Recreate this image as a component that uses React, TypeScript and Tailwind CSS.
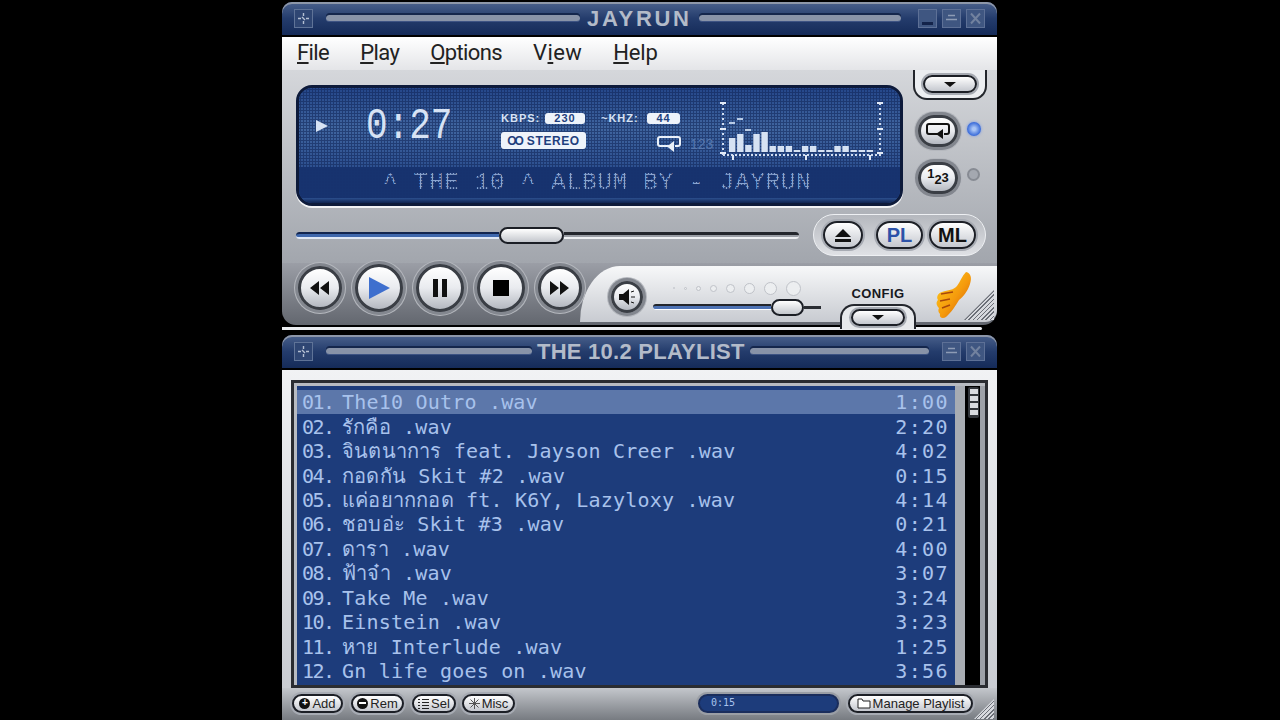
import type { ReactNode } from "react";

const tracks = [
  ["01.", "The10 Outro .wav", "1:00"],
  ["02.", "รักคือ .wav", "2:20"],
  ["03.", "จินตนาการ feat. Jayson Creer .wav", "4:02"],
  ["04.", "กอดกัน Skit #2 .wav", "0:15"],
  ["05.", "แค่อยากกอด ft. K6Y, Lazyloxy .wav", "4:14"],
  ["06.", "ชอบอ่ะ Skit #3 .wav", "0:21"],
  ["07.", "ดารา .wav", "4:00"],
  ["08.", "ฟ้าจ๋า .wav", "3:07"],
  ["09.", "Take Me .wav", "3:24"],
  ["10.", "Einstein .wav", "3:23"],
  ["11.", "หาย Interlude .wav", "1:25"],
  ["12.", "Gn life goes on .wav", "3:56"],
];

const bars = [14, 18, 7, 18, 20, 6, 6, 6, 2, 6, 6, 2, 2, 6, 6, 2, 2, 2];
const volumeDots = [2, 3, 5, 7, 9, 11, 13, 15];

function SysIcon() {
  return (
    <div className="flex h-[19px] w-[19px] shrink-0 items-center justify-center border border-[#5f7397] bg-[#2f4673]">
      <svg width="13" height="13" viewBox="0 0 13 13" stroke="#b4bfd2" strokeWidth="1.4">
        <path d="M6.5 1v3M6.5 9v3M1 6.5h3M9 6.5h3M5 5l3 3" />
      </svg>
    </div>
  );
}

function Groove({ className }: { className: string }) {
  return <div className={`h-[7px] shrink-0 rounded-full border-b border-[#3d5383] bg-[#8893a8] shadow-[0_-2px_0_#14264c] ${className}`} />;
}

function WinBtn({ kind }: { kind: "min" | "max" | "close" }) {
  return (
    <div className="flex h-[19px] w-[19px] items-center justify-center border border-[#5d7096] bg-[#3f5681]">
      <svg width="15" height="15" viewBox="0 0 15 15" fill="none">
        {kind === "min" && <path d="M2 12.5h11" stroke="#13234a" strokeWidth="3" />}
        {kind === "max" && <path d="M4 4.5h7M2 8.5h11" stroke="#8d9bb5" strokeWidth="1.6" />}
        {kind === "close" && <path d="M3 2.5l9 10M12 2.5l-9 10" stroke="#72829f" strokeWidth="2" />}
      </svg>
    </div>
  );
}

function TitleBar({ children }: { children: ReactNode }) {
  return (
    <div className="flex h-[33px] items-center rounded-t-[10px] bg-gradient-to-b from-[#4a618c] via-[#243c6c] to-[#152b59] pl-[12px] pr-[12px] shadow-[inset_0_2px_0_#8d97a9]">
      {children}
    </div>
  );
}

function Circle({ w, h, children }: { w: number; h: number; children: ReactNode }) {
  return (
    <div
      className="flex shrink-0 items-center justify-center rounded-full border-[3px] border-[#3a3e45] bg-gradient-to-b from-[#ffffff] via-[#e9ebef] to-[#b4b8c0] shadow-[0_0_0_3px_#83878f,0_0_0_4px_#b5b8be]"
      style={{ width: w, height: h }}
    >
      {children}
    </div>
  );
}

function Pill({ w, h, children, className = "" }: { w: string; h: string; children: ReactNode; className?: string }) {
  return (
    <div className={`flex shrink-0 items-center justify-center rounded-full border-[2.5px] border-[#1c1f26] bg-gradient-to-b from-[#ffffff] to-[#c5c8cf] shadow-[0_0_0_2px_#a7abb3] ${w} ${h} ${className}`}>
      {children}
    </div>
  );
}

function Down() {
  return <div className="h-0 w-0 border-x-[6px] border-t-[5px] border-x-transparent border-t-[#111]" />;
}

function ToolBtn({ w, icon, label }: { w: string; icon: ReactNode; label: string }) {
  return (
    <Pill w={w} h="h-[19px]" className="gap-[2px] text-[13px] leading-none text-[#222]">
      {icon}
      <span>{label}</span>
    </Pill>
  );
}

function Spectrum() {
  return (
    <svg width="168" height="64" viewBox="0 0 168 64" className="shrink-0">
      <path d="M3 2v53M160 2v53" stroke="#cfdcf0" strokeWidth="2" strokeDasharray="2 3" />
      <path d="M0 2h6M0 28h6M0 52h6M157 2h6M157 28h6M157 52h6" stroke="#e3ebf7" strokeWidth="2" />
      <path d="M3 54h158" stroke="#cfdcf0" strokeWidth="2" strokeDasharray="2 2" />
      <path d="M13 54v5M86 54v5M150 54v5" stroke="#dfe8f5" strokeWidth="2" />
      {bars.map((h, i) => (
        <rect key={i} x={9 + i * 8.1} y={51 - h} width="6.4" height={h} fill="#d6e2f3" />
      ))}
      <path d="M9 22h6M17 18h6M25 29h6" stroke="#b8cbe6" strokeWidth="2" />
    </svg>
  );
}

function Thumb() {
  return (
    <svg width="38" height="48" viewBox="0 0 38 48" className="shrink-0">
      <defs>
        <linearGradient id="th" x1="0" y1="0" x2="1" y2="1">
          <stop offset="0" stopColor="#ffd21f" />
          <stop offset="0.55" stopColor="#f59a0c" />
          <stop offset="1" stopColor="#c9530a" />
        </linearGradient>
      </defs>
      <path d="M31 1c5 1 6 6 4 12-2 7-7 13-11 16-3 5-8 13-13 17-3 2-7 1-6-3-2-2-2-4-1-6-3-3-3-6-1-8-2-3 0-7 4-8 6-2 12-2 15-6 3-4 5-10 9-14z" fill="url(#th)" />
      <path d="M6 23l12-2M5 30l10-2M7 37l8-3" stroke="#a8480a" strokeWidth="1.5" fill="none" />
    </svg>
  );
}

function Grip({ size }: { size: string }) {
  return (
    <div className={`absolute bottom-[2px] right-[3px] ${size} bg-[repeating-linear-gradient(135deg,#6b6f77_0_1px,#d7d9de_1px_3px)] [clip-path:polygon(100%_0,100%_100%,0_100%)]`} />
  );
}

export default function App() {
  const mono = "font-['DejaVu_Sans_Mono','Noto_Sans',monospace]";
  return (
    <div className="h-[720px] w-[1280px] overflow-hidden bg-black pl-[282px] pt-[2px] font-['Liberation_Sans',sans-serif]">
      <div className="w-[715px]">
        {/* main window */}
        <TitleBar>
          <SysIcon />
          <Groove className="ml-[13px] w-[254px]" />
          <span className="mx-[7px] whitespace-nowrap text-[22px] font-bold leading-none tracking-[2.7px] text-[#b3bbc9]">JAYRUN</span>
          <Groove className="w-[202px]" />
          <div className="ml-[17px] flex gap-[5px]">
            <WinBtn kind="min" />
            <WinBtn kind="max" />
            <WinBtn kind="close" />
          </div>
        </TitleBar>
        <div className="mt-[2px] flex h-[33px] items-center gap-[31px] bg-gradient-to-b from-white to-[#e4e5e8] pb-[2px] pl-[15px] font-['Roboto',sans-serif] text-[22px] leading-none tracking-[-0.6px] text-[#222]">
          <span><u>F</u>ile</span>
          <span><u>P</u>lay</span>
          <span><u>O</u>ptions</span>
          <span className="tracking-[0.4px]">V<u>i</u>ew</span>
          <span className="tracking-[-0.2px]"><u>H</u>elp</span>
        </div>
        <div className="flex h-[193px] bg-gradient-to-b from-[#d5d7db] to-[#a2a6ad] pl-[14px]">
          <div className="min-w-0 flex-1">
            <div className="mt-[15px] flex h-[121px] w-[607px] flex-col overflow-hidden rounded-[16px] border-[3px] border-[#0d1a3a] bg-[#2b4d8c] shadow-[0_2px_0_#f2f3f5]">
              <div className="relative flex h-[79px] shrink-0 bg-gradient-to-b from-[#25478a] via-[#40659f] to-[#2d5090] pl-[17px] pr-[14px] pt-[12px] text-[#d7e3f4]">
                <div className="absolute inset-0 bg-[radial-gradient(circle,rgba(15,35,85,0.55)_1px,transparent_1.2px)] bg-[length:3px_3px]" />
                <div className="relative mt-[20px] h-0 w-0 border-y-[6px] border-l-[12px] border-y-transparent border-l-[#d7e3f4]" />
                <div className="relative ml-[38px] mt-[4px] w-[85px] origin-top scale-y-125 font-['Liberation_Mono',monospace] text-[36px] leading-none">0:27</div>
                <div className="relative ml-[50px] flex w-[214px] flex-col gap-[7px] pt-[12px]">
                  <div className="flex h-[13px] items-center text-[11px] font-bold leading-none tracking-[1px]">
                    <span className="w-[44px]">KBPS:</span>
                    <div className="w-[40px] rounded-[3px] bg-[#eef3fa] text-center text-[11px] text-[#1f3f7d]">230</div>
                    <span className="ml-[16px] w-[46px]">~KHZ:</span>
                    <div className="w-[33px] rounded-[3px] bg-[#eef3fa] text-center text-[11px] text-[#1f3f7d]">44</div>
                  </div>
                  <div className="flex items-start">
                    <div className="flex h-[17px] w-[85px] items-center justify-center gap-[2px] rounded-[3px] bg-[#eef3fa] text-[12px] font-bold leading-none tracking-[0.6px] text-[#1f3f7d]">
                      <span className="tracking-[-2px]">OO</span>
                      <span className="ml-[3px]">STEREO</span>
                    </div>
                    <svg width="26" height="17" viewBox="0 0 26 17" className="ml-[70px] mt-[3px]" fill="none" stroke="#eaf0f9" strokeWidth="2">
                      <path d="M13 11H4a2 2 0 0 1-2-2V4a2 2 0 0 1 2-2h18a2 2 0 0 1 2 2v5a2 2 0 0 1-2 2h-3" />
                      <path d="M18 6v11l-7-5.500z" fill="#eaf0f9" stroke="none" />
                    </svg>
                    <span className="ml-[8px] mt-[5px] text-[14px] font-normal leading-none text-[#5677ad]">123</span>
                  </div>
                </div>
                <div className="relative ml-[7px] mt-[1px]">
                  <Spectrum />
                </div>
              </div>
              <div className="relative flex h-[31px] shrink-0 items-center bg-[#17336f] pl-[84px] font-['Liberation_Mono',monospace] text-[24px] leading-none tracking-[0.9px] text-[#8aa4d0]">
                <div className="absolute inset-0 bg-[radial-gradient(circle,transparent_1px,rgba(23,51,111,0.8)_1.2px)] bg-[length:3px_3px]" />
                <span className="whitespace-pre">^ THE 10 ^ ALBUM BY - JAYRUN</span>
              </div>
              <div className="flex-1 bg-gradient-to-b from-[#2c4f8e] to-[#0f2350]" />
            </div>
            <div className="mt-[23px] flex h-[12px] w-[503px] items-center">
              <div className="h-[7px] w-[203px] rounded-l-full border-y-2 border-t-[#12254f] border-b-[#dfe8f6] bg-[#3f68ad]" />
              <div className="z-10 h-[17px] w-[65px] shrink-0 rounded-full border-[2.5px] border-[#1b1e25] bg-gradient-to-b from-white to-[#c4c7cd]" />
              <div className="h-[7px] flex-1 rounded-r-full border-t-[3px] border-b-2 border-t-[#23262c] border-b-[#eef0f3] bg-[#9a9ea5]" />
            </div>
          </div>
          <div className="flex w-[94px] flex-col">
            <div className="ml-[10px] flex h-[30px] w-[74px] items-center justify-center rounded-b-[14px] border-x-2 border-b-2 border-[#23262c] bg-[#eceef1]">
              <Pill w="w-[54px]" h="h-[18px]"><Down /></Pill>
            </div>
            <div className="ml-[15px] mt-[15px] flex items-center gap-[9px]">
              <Circle w={40} h={32}>
                <svg width="26" height="18" viewBox="0 0 26 18" fill="none" stroke="#111" strokeWidth="2">
                  <path d="M13 12H4a2 2 0 0 1-2-2V4a2 2 0 0 1 2-2h18a2 2 0 0 1 2 2v6a2 2 0 0 1-2 2h-3" />
                  <path d="M18 7v10l-7-5z" fill="#111" stroke="none" />
                </svg>
              </Circle>
              <div className="mb-[5px] h-[14px] w-[14px] rounded-full bg-[radial-gradient(circle,#a9c5f5_15%,#3467d8_70%)] shadow-[0_0_3px_#6f93e8]" />
            </div>
            <div className="ml-[15px] mt-[15px] flex items-center gap-[9px]">
              <Circle w={40} h={32}>
                <div className="flex text-[13px] font-bold leading-none text-[#111]">
                  <span className="-mt-[3px]">1</span>
                  <span className="mt-[3px]">2</span>
                  <span className="mt-[1px]">3</span>
                </div>
              </Circle>
              <div className="mb-[7px] h-[13px] w-[13px] rounded-full border-[2px] border-[#878b93] bg-[#a4a8b0]" />
            </div>
            <div className="ml-[-90px] mt-[20px] flex h-[42px] w-[173px] items-center justify-center rounded-full border border-[#eef0f3] bg-gradient-to-b from-[#b5b8be] to-[#dfe1e5]">
              <Pill w="w-[40px]" h="h-[28px]">
                <svg width="18" height="15" viewBox="0 0 18 15" fill="#111"><path d="M9 1l8 8H1zM1 11h16v3H1z" /></svg>
              </Pill>
              <Pill w="w-[47px]" h="h-[28px]" className="ml-[13px]"><span className="text-[20px] font-bold leading-none text-[#2c52a8]">PL</span></Pill>
              <Pill w="w-[47px]" h="h-[28px]" className="ml-[6px]"><span className="text-[20px] font-bold leading-none text-[#111]">ML</span></Pill>
            </div>
          </div>
        </div>
        <div className="relative flex h-[62px] rounded-b-[14px] bg-gradient-to-b from-[#9b9ea6] to-[#63676f]">
          <div className="relative z-10 flex h-[50px] w-[298px] shrink-0 items-center gap-[13px] pl-[16px]">
            <Circle w={44} h={44}>
              <svg width="22" height="14" viewBox="0 0 22 14" fill="#111"><path d="M10 0v14L1 7zM20 0v14l-9-7z" /></svg>
            </Circle>
            <Circle w={48} h={48}>
              <svg width="24" height="24" viewBox="0 0 24 24"><path d="M2 1l21 11L2 23z" fill="#3e6fce" /></svg>
            </Circle>
            <Circle w={48} h={48}>
              <div className="flex gap-[4px]">
                <div className="h-[18px] w-[5px] bg-[#111]" />
                <div className="h-[18px] w-[5px] bg-[#111]" />
              </div>
            </Circle>
            <Circle w={48} h={48}>
              <div className="h-[16px] w-[16px] bg-black" />
            </Circle>
            <Circle w={44} h={44}>
              <svg width="22" height="14" viewBox="0 0 22 14" fill="#111"><path d="M1 0v14l9-7zM11 0v14l9-7z" /></svg>
            </Circle>
          </div>
          <div className="relative mt-[3px] flex h-[56px] flex-1 rounded-tl-[40px_56px] rounded-br-[12px] bg-gradient-to-b from-[#f7f8f9] to-[#c8cbd1] pl-[31px]">
            <div className="mt-[15px]">
              <Circle w={32} h={32}>
                <svg width="18" height="16" viewBox="0 0 18 16" fill="#111"><path d="M1 5h4l6-5v16l-6-5H1z" /><path d="M13 3l3-1M13 8h4M13 13l3 1" stroke="#111" fill="none" /></svg>
              </Circle>
            </div>
            <div className="ml-[10px] w-[168px]">
              <div className="mt-[13px] flex h-[18px] items-center justify-between px-[20px]">
                {volumeDots.map((d) => (
                  <div key={d} className="rounded-full border border-[#bfc2c8] bg-[#eceef0]" style={{ width: d, height: d }} />
                ))}
              </div>
              <div className="mt-[5px] flex h-[10px] items-center">
                <div className="h-[6px] w-[118px] rounded-l-full border-t-2 border-b border-t-[#23262c] border-b-[#fff] bg-[#4d72b4]" />
                <div className="z-10 h-[17px] w-[33px] shrink-0 rounded-full border-[2px] border-[#1b1e25] bg-gradient-to-b from-white to-[#c4c7cd]" />
                <div className="h-[3px] flex-1 bg-[#2a2d33]" />
              </div>
            </div>
            <div className="ml-[19px] flex w-[76px] flex-col items-center">
              <span className="mt-[21px] text-[13px] font-bold leading-none tracking-[0.4px] text-[#16181d]">CONFIG</span>
              <div className="mt-[4px] flex h-[25px] w-[76px] shrink-0 justify-center rounded-t-[14px] border-x-2 border-t-2 border-[#23262c] bg-[#e7e9ec] pt-[3px]">
                <Pill w="w-[54px]" h="h-[17px]"><Down /></Pill>
              </div>
            </div>
            <div className="ml-[19px] mt-[5px]">
              <Thumb />
            </div>
            <Grip size="h-[30px] w-[30px]" />
          </div>
        </div>
        <div className="mt-[2px] h-[3px] w-[700px] rounded-r-full bg-[#eceef1]" />

        {/* playlist window */}
        <div className="mt-[5px]">
          <TitleBar>
            <SysIcon />
            <Groove className="ml-[13px] w-[206px]" />
            <span className="mx-[5px] whitespace-nowrap text-[22px] font-bold leading-none tracking-[0.25px] text-[#b3bbc9]">THE 10.2 PLAYLIST</span>
            <Groove className="w-[179px]" />
            <div className="ml-[13px] flex gap-[5px]">
              <WinBtn kind="max" />
              <WinBtn kind="close" />
            </div>
          </TitleBar>
        </div>
        <div className="mt-[2px] bg-gradient-to-b from-[#f1f2f4] to-[#c5c8ce] px-[9px] pt-[10px]">
          <div className="flex h-[308px] border-[3px] border-[#2a2c31] bg-[#b8bbc1] pl-[3px] pt-[3px]">
            <div className={`w-[658px] shrink-0 bg-[#1d3c7b] pt-[4px] ${mono} text-[20px] leading-none text-[#a8c2ec]`}>
              {tracks.map(([num, title, time], i) => (
                <div key={num} className={`flex h-[24.45px] items-center pl-[5px] pr-[6px] ${i === 0 ? "bg-[#5c77aa]" : ""}`}>
                  <span className="w-[40px] shrink-0 tracking-[-1.5px]">{num}</span>
                  <span className="flex-1 whitespace-nowrap tracking-[0.2px]">{title}</span>
                  <span className="tracking-[1.4px]">{time}</span>
                </div>
              ))}
            </div>
            <div className="flex h-full flex-1">
              <div className="w-[10px] bg-[#a8acb3]" />
              <div className="w-[15px] bg-black pl-[3px] pt-[1px]">
                <div className="flex h-[31px] w-[11px] flex-col gap-[2px] rounded-[2px] bg-[#33363b] p-[1.5px]">
                  <div className="h-[5px] bg-[#d9dbdf]" />
                  <div className="h-[5px] bg-[#d9dbdf]" />
                  <div className="h-[5px] bg-[#d9dbdf]" />
                  <div className="h-[5px] bg-[#d9dbdf]" />
                </div>
              </div>
              <div className="flex-1 bg-[#9da1a8]" />
            </div>
          </div>
          <div className="relative -mx-[9px] flex h-[33px] items-center bg-gradient-to-b from-[#c4c7cc] to-[#75797f] pb-[3px] pl-[10px] text-[#222]">
            <ToolBtn w="w-[51px]" label="Add" icon={<div className="flex h-[11px] w-[11px] items-center justify-center rounded-full bg-[#111] text-[10px] font-bold leading-none text-white">+</div>} />
            <div className="ml-[8px]" />
            <ToolBtn w="w-[53px]" label="Rem" icon={<div className="flex h-[11px] w-[11px] items-center justify-center rounded-full bg-[#111]"><div className="h-[2px] w-[7px] bg-white" /></div>} />
            <div className="ml-[8px]" />
            <ToolBtn w="w-[44px]" label="Sel" icon={<svg width="11" height="11" viewBox="0 0 11 11" stroke="#222"><path d="M0 1.500h2M4 1.500h7M0 4.500h2M4 4.500h7M0 7.500h2M4 7.500h7M0 10.500h2M4 10.500h7" /></svg>} />
            <div className="ml-[6px]" />
            <ToolBtn w="w-[53px]" label="Misc" icon={<svg width="11" height="11" viewBox="0 0 11 11" stroke="#555"><path d="M5.500 0v11M0 5.500h11M1.500 1.500l8 8M9.500 1.500l-8 8" /></svg>} />
            <div className="ml-[183px] flex h-[19px] w-[141px] shrink-0 items-center rounded-full border-[2px] border-[#1a2d5c] bg-[#1d3c7b] pl-[11px] font-['DejaVu_Sans_Mono',monospace] text-[10px] leading-none text-[#a8c2ec] shadow-[0_0_0_2px_#9a9ea5]">0:15</div>
            <div className="ml-[9px]" />
            <ToolBtn w="w-[125px]" label="Manage Playlist" icon={<svg width="14" height="12" viewBox="0 0 14 12" fill="#fff" stroke="#222"><path d="M1 2h4l1 2h7v7H1z" /></svg>} />
            <Grip size="h-[20px] w-[20px]" />
          </div>
        </div>
      </div>
    </div>
  );
}
